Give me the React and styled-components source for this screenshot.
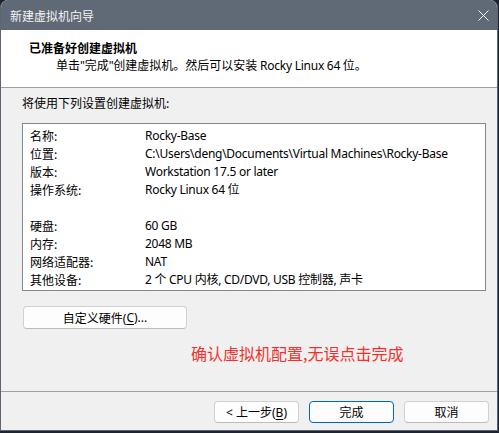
import React from 'react'
import styled, { createGlobalStyle } from 'styled-components'

const GlobalStyle = createGlobalStyle`
  html, body {
    margin: 0;
    padding: 0;
    background: #1d2431;
  }
  body {
    font-family: "Segoe UI", "Noto Sans", "Noto Sans CJK SC", sans-serif;
    font-size: 12px;
    color: #000;
  }
`

const Window = styled.div`
  width: 498px;
  height: 431px;
  box-sizing: border-box;
  display: flex;
  flex-direction: column;
  background: #f0f0f0;
  border: 1px solid #5d6572;
  border-top: none;
  border-radius: 8px 8px 0 0;
  overflow: hidden;
`

const TitleBar = styled.div`
  height: 30px;
  flex: none;
  display: flex;
  align-items: center;
  justify-content: space-between;
  background: #606976;
  color: #f4f4f4;
  padding-left: 9px;
`

const TitleText = styled.span`
  font-family: "Noto Sans CJK SC", sans-serif;
  font-size: 12px;
`

const CloseButton = styled.div`
  width: 28px;
  height: 30px;
  display: flex;
  align-items: center;
  justify-content: center;
`

const Header = styled.div`
  height: 58px;
  flex: none;
  box-sizing: border-box;
  background: #fff;
  border-bottom: 1px solid #a0a0a0;
  padding: 9px 0 0 28px;
  font-family: "Noto Sans CJK SC", sans-serif;
`

const HeaderTitle = styled.div`
  font-weight: bold;
  line-height: 17px;
`

const HeaderSub = styled.div`
  line-height: 17px;
  padding-left: 27px;
`

const Latin = styled.span`
  font-family: "Segoe UI", "Noto Sans", sans-serif;
  letter-spacing: -0.25px;
`

const Body = styled.div`
  flex: 1;
  padding: 7px 0 0 21px;
  font-family: "Noto Sans CJK SC", sans-serif;
`

const Intro = styled.div`
  line-height: 16px;
`

const SummaryBox = styled.div`
  margin-top: 12px;
  width: 464px;
  height: 168px;
  box-sizing: border-box;
  background: #fff;
  border: 1px solid #828790;
  padding: 2px 0 0 7px;
  display: grid;
  grid-template-columns: 115px 1fr;
  grid-auto-rows: 18px;
  align-items: center;
`

const Label = styled.div`
  white-space: nowrap;
`

const Value = styled.div`
  white-space: nowrap;
  font-family: "Segoe UI", "Noto Sans", "Noto Sans CJK SC", sans-serif;
  letter-spacing: -0.27px;
`

const Spacer = styled.div`
  grid-column: 1 / span 2;
`

const Button = styled.button`
  box-sizing: border-box;
  width: ${p => p.$width || 85}px;
  height: ${p => p.$height || 22}px;
  padding: 0;
  background: #fdfdfd;
  border: 1px solid ${p => p.$primary ? '#0067c0' : '#d0d0d0'};
  border-bottom-color: ${p => p.$primary ? '#0067c0' : '#bcbcbc'};
  border-radius: 4px;
  font-family: "Segoe UI", "Noto Sans", "Noto Sans CJK SC", sans-serif;
  font-size: 12px;
  color: #000;
  display: flex;
  align-items: center;
  justify-content: center;
`

const Key = styled.span`
  text-decoration: underline;
  text-underline-offset: 2px;
`

const CustomRow = styled.div`
  margin-top: 15px;
  padding-left: 1px;
`

const Note = styled.div`
  margin-top: 14px;
  padding-left: 169px;
  line-height: 20px;
  color: #f2302c;
  font-family: "Noto Sans CJK SC", sans-serif;
  font-size: 16px;
`

const Footer = styled.div`
  height: 39px;
  flex: none;
  box-sizing: border-box;
  border-top: 1px solid #a0a0a0;
  display: flex;
  justify-content: flex-end;
  gap: 10px;
  padding: 9px 8px 0 0;
`

const rows = [
  ['名称:', 'Rocky-Base'],
  ['位置:', 'C:\\Users\\deng\\Documents\\Virtual Machines\\Rocky-Base'],
  ['版本:', 'Workstation 17.5 or later'],
  ['操作系统:', 'Rocky Linux 64 位'],
  null,
  ['硬盘:', '60 GB'],
  ['内存:', '2048 MB'],
  ['网络适配器:', 'NAT'],
  ['其他设备:', '2 个 CPU 内核, CD/DVD, USB 控制器, 声卡']
]

export default function App () {
  return (
    <>
      <GlobalStyle />
      <Window>
        <TitleBar>
          <TitleText>新建虚拟机向导</TitleText>
          <CloseButton>
            <svg width='11' height='11' viewBox='0 0 11 11'>
              <path d='M0.5 0.5 L10.5 10.5 M10.5 0.5 L0.5 10.5' stroke='#f4f4f4' strokeWidth='1' />
            </svg>
          </CloseButton>
        </TitleBar>
        <Header>
          <HeaderTitle>已准备好创建虚拟机</HeaderTitle>
          <HeaderSub>单击<Latin>"</Latin>完成<Latin>"</Latin>创建虚拟机。然后可以安装 <Latin>Rocky Linux 64</Latin> 位。</HeaderSub>
        </Header>
        <Body>
          <Intro>将使用下列设置创建虚拟机:</Intro>
          <SummaryBox>
            {rows.map((r, i) => r
              ? (
                <React.Fragment key={i}>
                  <Label>{r[0]}</Label>
                  <Value>{r[1]}</Value>
                </React.Fragment>
                )
              : <Spacer key={i} />)}
          </SummaryBox>
          <CustomRow>
            <Button $width={164} $height={23}>自定义硬件(<Key>C</Key>)...</Button>
          </CustomRow>
          <Note>确认虚拟机配置,无误点击完成</Note>
        </Body>
        <Footer>
          <Button>&lt; 上一步(<Key>B</Key>)</Button>
          <Button $primary>完成</Button>
          <Button>取消</Button>
        </Footer>
      </Window>
    </>
  )
}
